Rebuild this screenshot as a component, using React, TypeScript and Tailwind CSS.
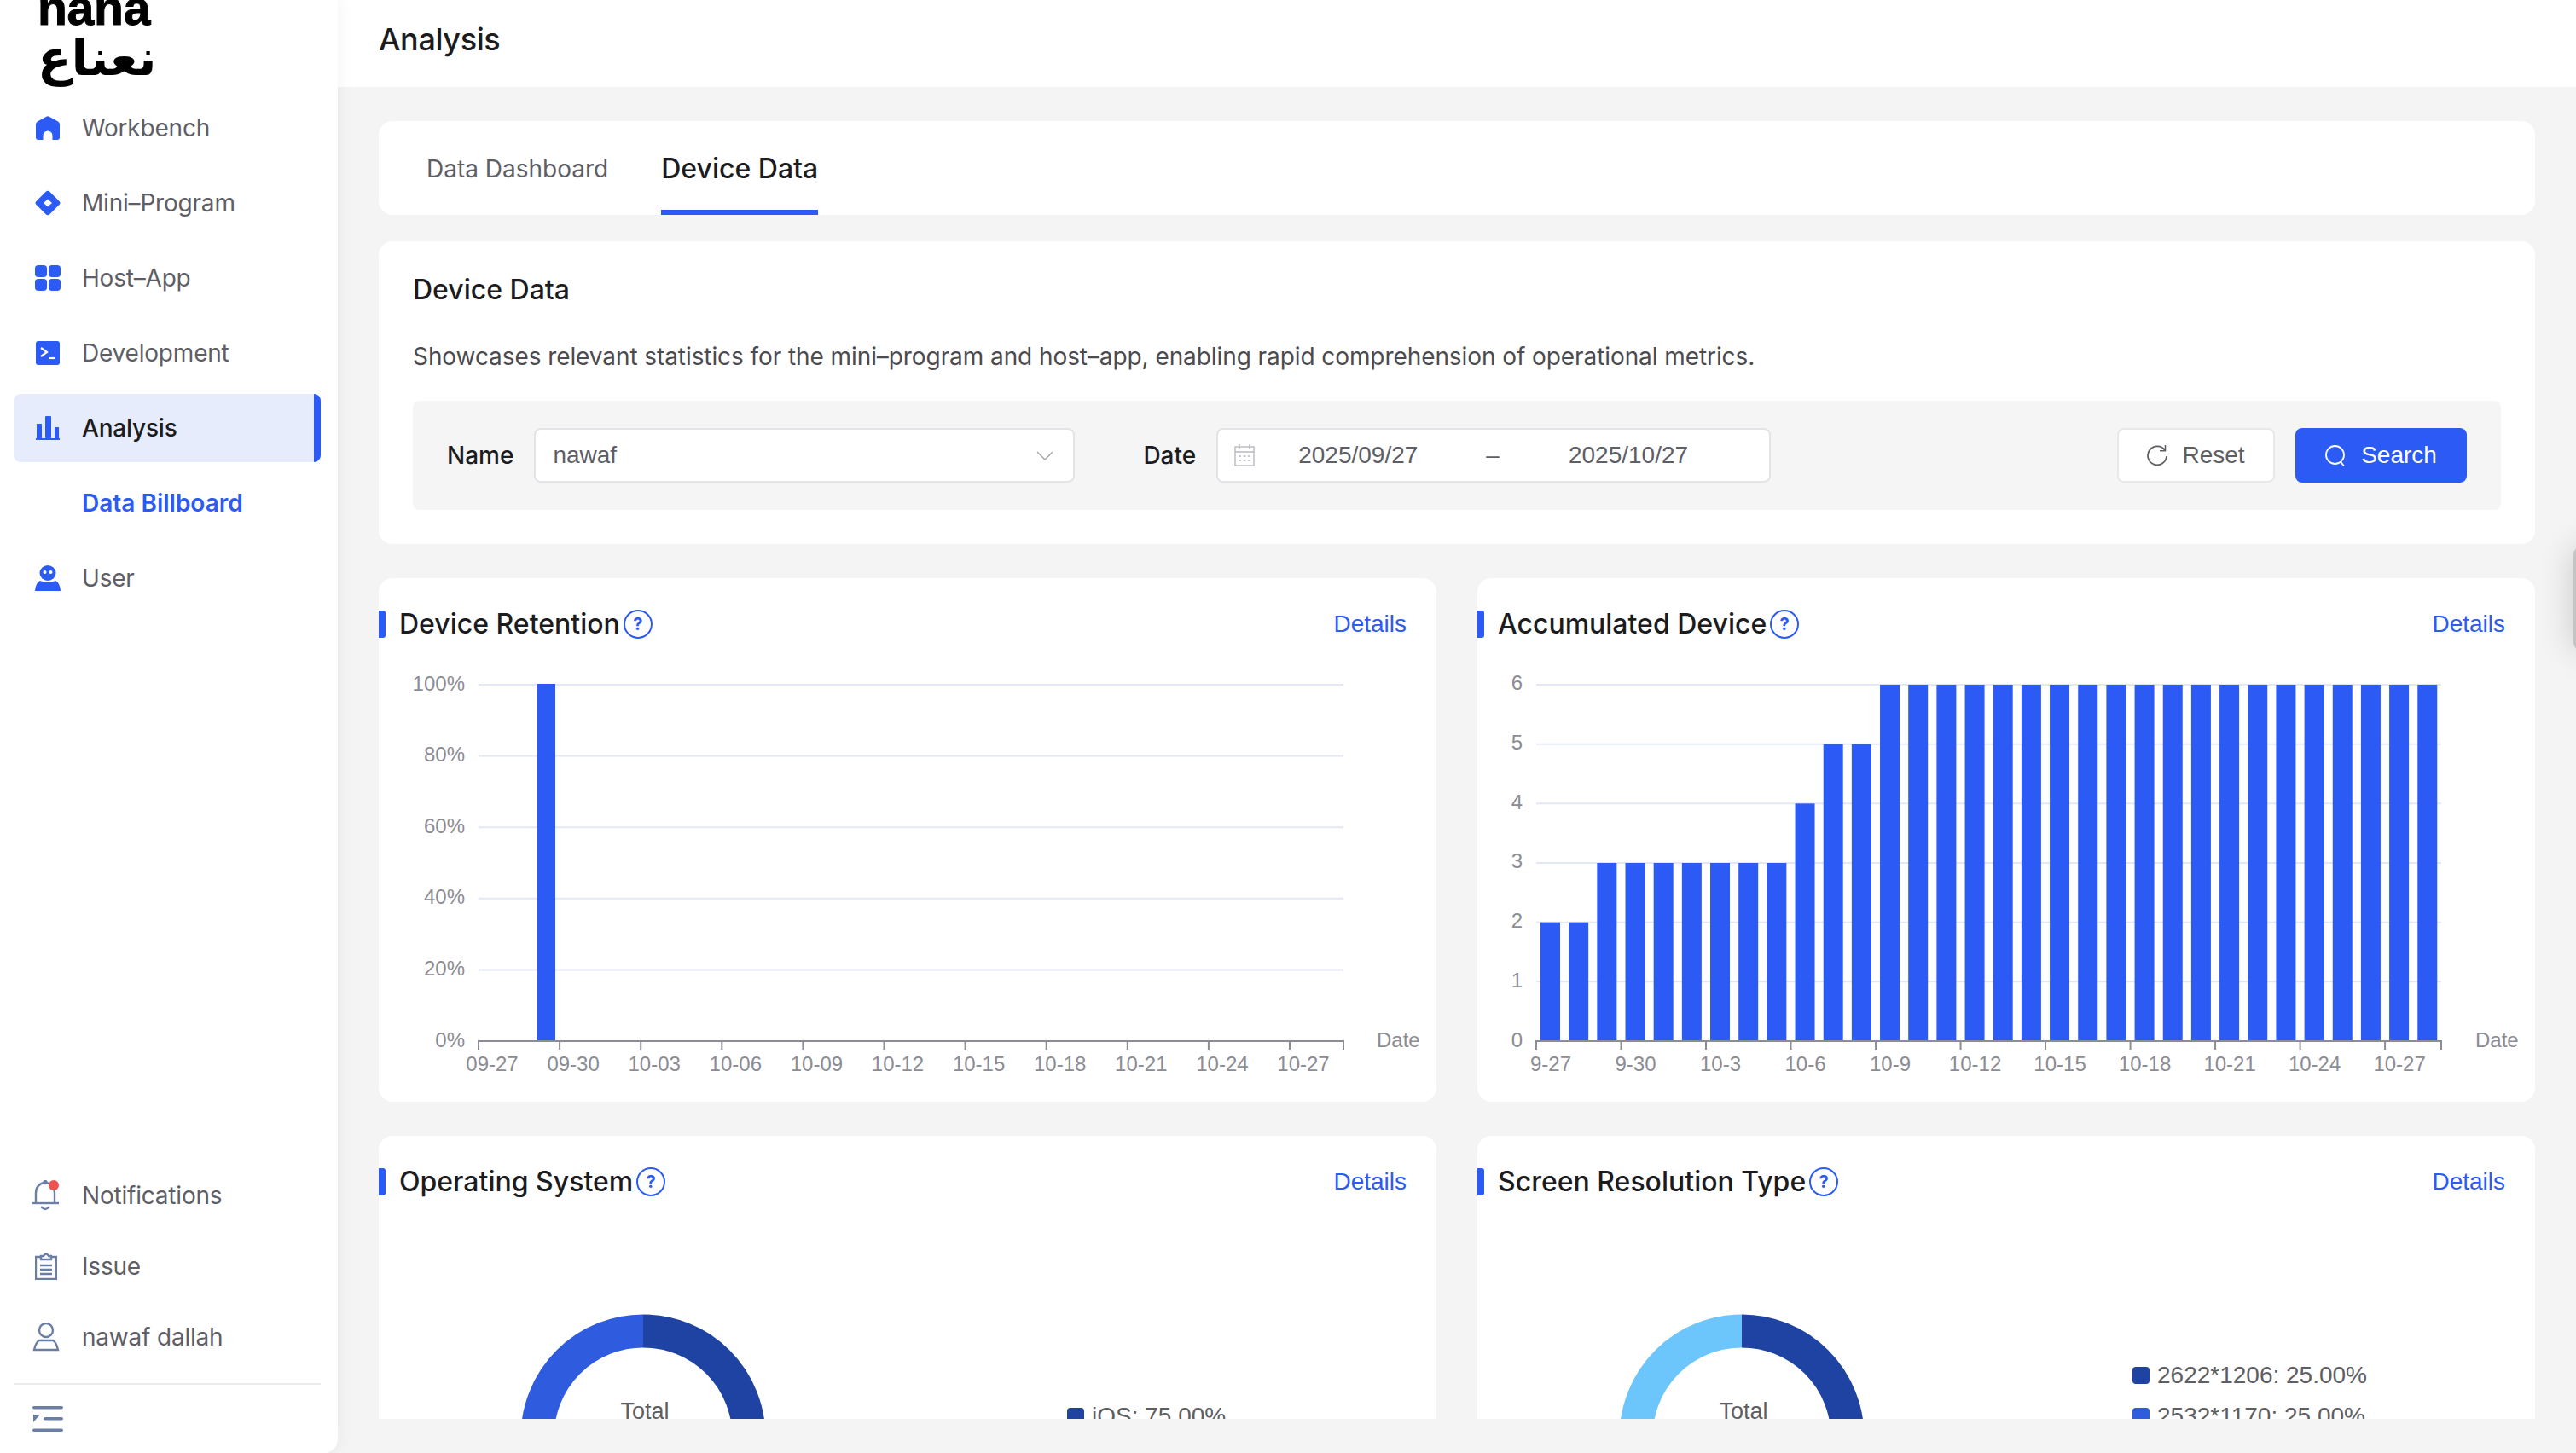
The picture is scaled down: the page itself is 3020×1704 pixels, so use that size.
const blue = "#2b5af5"

function HomeIcon() {
  return (
    <svg width="28" height="28" viewBox="0 0 28 28" fill={blue}>
      <path d="M12.3.7Q14-.2 15.7.7L26 6.6Q28 7.8 28 10V25Q28 28 25 28H19.5V23A5.5 5.5 0 0 0 8.5 23V28H3Q0 28 0 25V10Q0 7.8 2 6.6Z" />
    </svg>
  )
}

function DiamondIcon() {
  return (
    <svg width="30" height="30" viewBox="0 0 30 30">
      <path d="M13 1.5Q15 0 17 1.5L28.5 13Q30.5 15 28.5 17L17 28.5Q15 30 13 28.5L1.5 17Q-.5 15 1.5 13Z" fill={blue} />
      <path d="M15 10.5L20 15L15 19.5L10 15Z" fill="#fff" />
    </svg>
  )
}

function GridIcon() {
  return (
    <svg width="30" height="30" viewBox="0 0 30 30" fill={blue}>
      <rect x="0" y="0" width="14" height="14" rx="4" />
      <rect x="16" y="0" width="14" height="14" rx="4" />
      <rect x="0" y="16" width="14" height="14" rx="4" />
      <rect x="16" y="16" width="14" height="14" rx="4" />
    </svg>
  )
}

function TerminalIcon() {
  return (
    <svg width="28" height="28" viewBox="0 0 28 28">
      <rect width="28" height="28" rx="3" fill={blue} />
      <path d="M6 8L13 13L6 18" fill="none" stroke="#fff" strokeWidth="2.2" />
      <path d="M15 20H22" stroke="#fff" strokeWidth="2.2" />
    </svg>
  )
}

function BarsIcon() {
  return (
    <svg width="28" height="28" viewBox="0 0 28 28" fill={blue}>
      <rect x="1" y="9" width="6" height="17" />
      <rect x="11" y="0" width="7" height="26" rx="1" />
      <rect x="22" y="13" width="5" height="13" />
      <rect x="0" y="26" width="28" height="2" />
    </svg>
  )
}

function RobotIcon() {
  return (
    <svg width="30" height="30" viewBox="0 0 30 30">
      <ellipse cx="15" cy="9" rx="9.5" ry="9" fill={blue} />
      <circle cx="11.5" cy="8" r="2" fill="#fff" />
      <circle cx="18.5" cy="8" r="2" fill="#fff" />
      <path d="M6 18Q15 22 24 18Q29 20 30 30H0Q1 20 6 18Z" fill={blue} />
    </svg>
  )
}

function BellIcon() {
  return (
    <svg width="34" height="36" viewBox="0 0 34 36" fill="none" stroke="#6b7fa6" strokeWidth="2.4">
      <path d="M5 26V15C5 8 10 3 16 3C22 3 27 8 27 15V26" />
      <path d="M0 27H32" />
      <path d="M11 31Q16 37 21 31" />
      <circle cx="16" cy="2.5" r="1.5" />
      <circle cx="26" cy="6" r="6" fill="#ef5350" stroke="none" />
    </svg>
  )
}

function ClipboardIcon() {
  return (
    <svg width="26" height="32" viewBox="0 0 26 32" fill="none" stroke="#6b7fa6" strokeWidth="2.4">
      <path d="M7 5H1V31H25V5H19" />
      <path d="M7 8V4H10Q13-1 16 4H19V8Z" />
      <path d="M6 15H20M6 20H20M6 25H20" />
    </svg>
  )
}

function PersonIcon() {
  return (
    <svg width="32" height="34" viewBox="0 0 32 34" fill="none" stroke="#6b7fa6" strokeWidth="2.4">
      <circle cx="16" cy="9" r="8" />
      <path d="M8 21H24Q28 23 30 32H2Q4 23 8 21Z" />
    </svg>
  )
}

function CollapseIcon() {
  return (
    <svg width="36" height="30" viewBox="0 0 36 30" fill="#6b7fa6">
      <rect x="0" y="0" width="36" height="3.5" rx="1.75" />
      <rect x="13" y="13" width="23" height="3.5" rx="1.75" />
      <rect x="0" y="26.5" width="36" height="3.5" rx="1.75" />
      <path d="M1 10H9L1 19Z" />
    </svg>
  )
}

function ResetIcon() {
  return (
    <svg width="24" height="24" viewBox="0 0 24 24" fill="none" stroke="#5e5e63" strokeWidth="1.8">
      <path d="M21 6A11 11 0 1 0 23 13" />
      <path d="M21.5 0V6.8H15" strokeWidth="1.5" />
    </svg>
  )
}

function SearchIcon() {
  return (
    <svg width="24" height="25" viewBox="0 0 24 25" fill="none" stroke="#fff" strokeWidth="1.8">
      <circle cx="11.5" cy="11.5" r="10.5" />
      <path d="M18.5 20L22 24.5" />
    </svg>
  )
}

function CalendarIcon() {
  return (
    <svg width="24" height="26" viewBox="0 0 24 26" fill="none" stroke="#b8b8c0" strokeWidth="1.4">
      <rect x="1" y="3" width="22" height="22" />
      <path d="M1 9H23M6 0V5M18 0V5" />
      <path d="M5 14H8M10.5 14H13.5M16 14H19M5 19H8M10.5 19H13.5M16 19H19" strokeWidth="1.6" />
    </svg>
  )
}

function NavItem({
  icon,
  label,
  active,
}: {
  icon?: React.ReactNode
  label: string
  active?: boolean
}) {
  return (
    <div
      className={
        active
          ? "relative flex h-[80px] items-center overflow-hidden rounded-lg bg-[#e6ecfc] font-medium text-[#1c1c1f]"
          : "flex h-[80px] items-center text-[#5e5e66]"
      }>
      <span className="flex w-[80px] shrink-0 justify-center">{icon}</span>
      <span>{label}</span>
      {active && <span className="absolute right-0 top-0 h-full w-[8px] bg-[#2b5af5]" />}
    </div>
  )
}

function FooterItem({ icon, label }: { icon: React.ReactNode; label: string }) {
  return (
    <div className="flex h-[83px] items-center text-[#5e5e66]">
      <span className="flex w-[96px] shrink-0 justify-center pl-[12px]">{icon}</span>
      <span>{label}</span>
    </div>
  )
}

function Sidebar() {
  return (
    <aside className="z-10 flex w-[396px] shrink-0 flex-col rounded-br-[16px] bg-white text-[28px] tracking-[-0.2px] shadow-[0_0_20px_rgba(0,0,0,0.06)]">
      <div className="h-[110px] overflow-hidden pl-[44px] text-black">
        <div className="mt-[-22px] h-[62px] text-[57px] leading-[62px] font-bold font-['Liberation_Sans',sans-serif] [-webkit-text-stroke:1px_black]">
          nana
        </div>
        <div className="text-[58px] leading-[56px] font-bold font-['DejaVu_Sans',sans-serif]">
          نعناع
        </div>
      </div>

      <nav className="flex flex-col gap-2 pl-4 pr-5">
        <NavItem icon={<HomeIcon />} label="Workbench" />
        <NavItem icon={<DiamondIcon />} label="Mini–Program" />
        <NavItem icon={<GridIcon />} label="Host–App" />
        <NavItem icon={<TerminalIcon />} label="Development" />
        <NavItem icon={<BarsIcon />} label="Analysis" active />
        <div className="flex h-[80px] items-center pl-[80px] font-semibold tracking-normal text-[#2b5af5]">Data Billboard</div>
        <NavItem icon={<RobotIcon />} label="User" />
      </nav>

      <div className="mt-auto">
        <FooterItem icon={<BellIcon />} label="Notifications" />
        <FooterItem icon={<ClipboardIcon />} label="Issue" />
        <FooterItem icon={<PersonIcon />} label="nawaf dallah" />
        <div className="ml-4 mr-5 mt-[13px] h-[2px] bg-[#ebebeb]" />
        <div className="flex h-[80px] items-center pl-[38px]">
          <CollapseIcon />
        </div>
      </div>
    </aside>
  )
}

function QuestionMark() {
  return (
    <span className="ml-[4px] flex h-[34px] w-[34px] items-center justify-center rounded-full border-2 border-[#2b5af5] text-[20px] font-bold leading-none tracking-normal text-[#2b5af5]">
      ?
    </span>
  )
}

function ChartHeader({ title }: { title: string }) {
  return (
    <div className="flex h-[32px] items-center justify-between pr-[35px]">
      <div className="flex items-center">
        <span className="mr-[16px] h-[32px] w-[8px] rounded-r-[3px] bg-[#2b5af5]" />
        <span className="text-[32px] font-medium text-[#1c1c1f]">{title}</span>
        <QuestionMark />
      </div>
      <span className="text-[28px] text-[#2b5af5] font-['Liberation_Sans',sans-serif]">Details</span>
    </div>
  )
}

const axisText = "fill-[#8c8c94] text-[24px] font-['Liberation_Sans',sans-serif]"

function RetentionChart() {
  const yLabels = ["100%", "80%", "60%", "40%", "20%", "0%"]
  const step = 31.7
  const labels = ["09-27", "09-30", "10-03", "10-06", "10-09", "10-12", "10-15", "10-18", "10-21", "10-24", "10-27"]
  return (
    <svg width="1240" height="512" viewBox="444 780 1240 512" className="mt-[32px] block">
      {yLabels.map((l, i) => {
        const y = 803 + i * 83.6
        return (
          <g key={l}>
            {i < 5 && <line x1="561" x2="1575" y1={y} y2={y} stroke="#e4e8f3" strokeWidth="2" />}
            <text x="545" y={y - 2} textAnchor="end" dominantBaseline="central" className={axisText}>
              {l}
            </text>
          </g>
        )
      })}
      <rect x="630" y="802" width="21" height="419" fill={blue} />
      <line x1="560" x2="1576" y1="1221" y2="1221" stroke="#8c8c94" strokeWidth="2" />
      {labels.map((l, i) => (
        <g key={l}>
          <line x1={561 + i * 3 * step} x2={561 + i * 3 * step} y1="1221" y2="1231" stroke="#8c8c94" strokeWidth="2" />
          <text x={577 + i * 3 * step} y="1247" textAnchor="middle" dominantBaseline="central" className={axisText}>
            {l}
          </text>
        </g>
      ))}
      <line x1="1575" x2="1575" y1="1221" y2="1231" stroke="#8c8c94" strokeWidth="2" />
      <text x="1614" y="1219" dominantBaseline="central" className={axisText}>
        Date
      </text>
    </svg>
  )
}

function AccumulatedChart() {
  const values = [2, 2, 3, 3, 3, 3, 3, 3, 3, 4, 5, 5, ...Array(20).fill(6)]
  const step = 33.17
  const pitch = 69.67
  const labels = ["9-27", "9-30", "10-3", "10-6", "10-9", "10-12", "10-15", "10-18", "10-21", "10-24", "10-27"]
  return (
    <svg width="1240" height="512" viewBox="1732 780 1240 512" className="mt-[32px] block">
      {[0, 1, 2, 3, 4, 5, 6].map((v) => {
        const y = 1221 - v * pitch
        return (
          <g key={v}>
            {v > 0 && <line x1="1801" x2="2862" y1={y} y2={y} stroke="#e4e8f3" strokeWidth="2" />}
            <text x="1785" y={y - 2} textAnchor="end" dominantBaseline="central" className={axisText}>
              {v}
            </text>
          </g>
        )
      })}
      {values.map((v, i) => (
        <rect key={i} x={1806 + i * step} y={1221 - v * pitch} width="23" height={v * pitch} fill={blue} />
      ))}
      <line x1="1800" x2="2863" y1="1221" y2="1221" stroke="#8c8c94" strokeWidth="2" />
      {labels.map((l, i) => (
        <g key={l}>
          <line x1={1801 + i * 3 * step} x2={1801 + i * 3 * step} y1="1221" y2="1231" stroke="#8c8c94" strokeWidth="2" />
          <text x={1818 + i * 3 * step} y="1247" textAnchor="middle" dominantBaseline="central" className={axisText}>
            {l}
          </text>
        </g>
      ))}
      <line x1="2862" x2="2862" y1="1221" y2="1231" stroke="#8c8c94" strokeWidth="2" />
      <text x="2902" y="1219" dominantBaseline="central" className={axisText}>
        Date
      </text>
    </svg>
  )
}

function Donut({ left, right }: { left: string; right: string }) {
  return (
    <svg width="288" height="288" viewBox="0 0 288 288" className="block shrink-0">
      <path d="M144 20A124 124 0 0 0 144 268" fill="none" stroke={left} strokeWidth="39" />
      <path d="M144 20A124 124 0 0 1 144 268" fill="none" stroke={right} strokeWidth="39" />
      <text
        x="146"
        y="114"
        textAnchor="middle"
        dominantBaseline="central"
        className="fill-[#5e5e63] text-[27px] font-['Liberation_Sans',sans-serif]">
        Total
      </text>
    </svg>
  )
}

function LegendRow({ color, label }: { color: string; label: string }) {
  return (
    <div className="flex h-[28px] items-center gap-[9px] text-[28px] text-[#5e5e63] font-['Liberation_Sans',sans-serif]">
      <span className="h-[20px] w-[20px] rounded-[4px]" style={{ backgroundColor: color }} />
      {label}
    </div>
  )
}

function Field({ label, className, children }: { label: string; className: string; children: React.ReactNode }) {
  return (
    <div className="flex items-center">
      <span className="mr-[24px] text-[28px] font-medium text-[#1c1c1f]">{label}</span>
      <div className={className}>{children}</div>
    </div>
  )
}

export default function App() {
  return (
    <div className="relative flex h-[1704px] w-[3020px] overflow-hidden bg-[#f4f4f4] font-['Inter',sans-serif]">
      <Sidebar />

      <main className="flex min-w-0 flex-1 flex-col">
        <header className="flex h-[102px] shrink-0 items-center bg-white pl-[48px] pb-[10px] text-[36px] font-medium tracking-[-0.4px] text-[#1c1c1f]">
          Analysis
        </header>

        <div className="mb-[40px] min-h-0 flex-1 overflow-hidden px-[48px] pt-[40px]">
          {/* Tabs */}
          <div className="flex h-[110px] items-stretch gap-[62px] rounded-2xl bg-white pl-[56px] text-[28px]">
            <div className="flex items-center pt-[2px] text-[#5e5e66]">Data Dashboard</div>
            <div className="flex items-center border-b-[6px] border-[#2b5af5] pt-[8px] text-[32px] font-medium text-[#1c1c1f]">
              Device Data
            </div>
          </div>

          {/* Filters */}
          <section className="mt-[31px] h-[355px] rounded-2xl bg-white px-[40px] pt-[38px]">
            <h2 className="text-[32px] leading-[38px] font-medium text-[#1c1c1f]">Device Data</h2>
            <p className="mt-[40px] text-[28px] leading-[38px] tracking-[-0.08px] text-[#4b4b50]">
              Showcases relevant statistics for the mini–program and host–app, enabling rapid comprehension of operational metrics.
            </p>
            <div className="mt-[33px] flex h-[128px] items-center rounded-lg bg-[#f5f5f5] px-[40px]">
              <Field
                label="Name"
                className="flex h-[64px] w-[634px] items-center justify-between rounded-lg border-2 border-[#e3e3e8] bg-white pl-[20px] pr-[23px] text-[28px] text-[#5e5e66] font-['Liberation_Sans',sans-serif]">
                nawaf
                <svg width="20" height="11" viewBox="0 0 20 11" fill="none" stroke="#a0a0a8" strokeWidth="1.3">
                  <path d="M1 1L10 10L19 1" />
                </svg>
              </Field>
              <div className="ml-[80px]">
                <Field
                  label="Date"
                  className="flex h-[64px] w-[650px] items-center rounded-lg border-2 border-[#e3e3e8] bg-white pl-[19px] text-[28px] text-[#5e5e66] font-['Liberation_Sans',sans-serif]">
                  <CalendarIcon />
                  <span className="ml-[51px]">2025/09/27</span>
                  <span className="ml-[80px]">–</span>
                  <span className="ml-[81px]">2025/10/27</span>
                </Field>
              </div>
              <button className="ml-auto flex h-[64px] w-[185px] items-center justify-center gap-[17px] rounded-lg border-2 border-[#e8e8e8] bg-white text-[28px] text-[#5e5e63] font-['Liberation_Sans',sans-serif]">
                <ResetIcon />
                Reset
              </button>
              <button className="ml-[24px] flex h-[64px] w-[201px] items-center justify-center gap-[18px] rounded-lg bg-[#2b5af5] text-[28px] text-white font-['Liberation_Sans',sans-serif]">
                <SearchIcon />
                Search
              </button>
            </div>
          </section>

          {/* Charts */}
          <div className="mt-[40px] grid grid-cols-2 gap-x-[48px] gap-y-[40px]">
            <section className="h-[614px] overflow-hidden rounded-2xl bg-white pt-[38px]">
              <ChartHeader title="Device Retention" />
              <RetentionChart />
            </section>
            <section className="h-[614px] overflow-hidden rounded-2xl bg-white pt-[38px]">
              <ChartHeader title="Accumulated Device" />
              <AccumulatedChart />
            </section>
            <section className="h-[614px] overflow-hidden rounded-2xl bg-white pt-[38px]">
              <ChartHeader title="Operating System" />
              <div className="mt-[139px] flex pl-[166px]">
                <Donut left="#2f5bdf" right="#1f43a3" />
                <div className="ml-[353px] pt-[106px]">
                  <LegendRow color="#1f43a3" label="iOS: 75.00%" />
                </div>
              </div>
            </section>
            <section className="h-[614px] overflow-hidden rounded-2xl bg-white pt-[38px]">
              <ChartHeader title="Screen Resolution Type" />
              <div className="mt-[139px] flex pl-[166px]">
                <Donut left="#6cc5fb" right="#1f43a3" />
                <div className="ml-[314px] flex flex-col gap-[20px] pt-[58px]">
                  <LegendRow color="#1f43a3" label="2622*1206: 25.00%" />
                  <LegendRow color="#2f5bdf" label="2532*1170: 25.00%" />
                </div>
              </div>
            </section>
          </div>
        </div>
      </main>

      {/* drawer handle peeking in from the right edge */}
      <div className="absolute right-[-40px] top-[642px] h-[120px] w-[43px] rounded-l-lg bg-[#c4c4c4] shadow-[0_0_40px_rgba(0,0,0,0.18)]" />
    </div>
  )
}
